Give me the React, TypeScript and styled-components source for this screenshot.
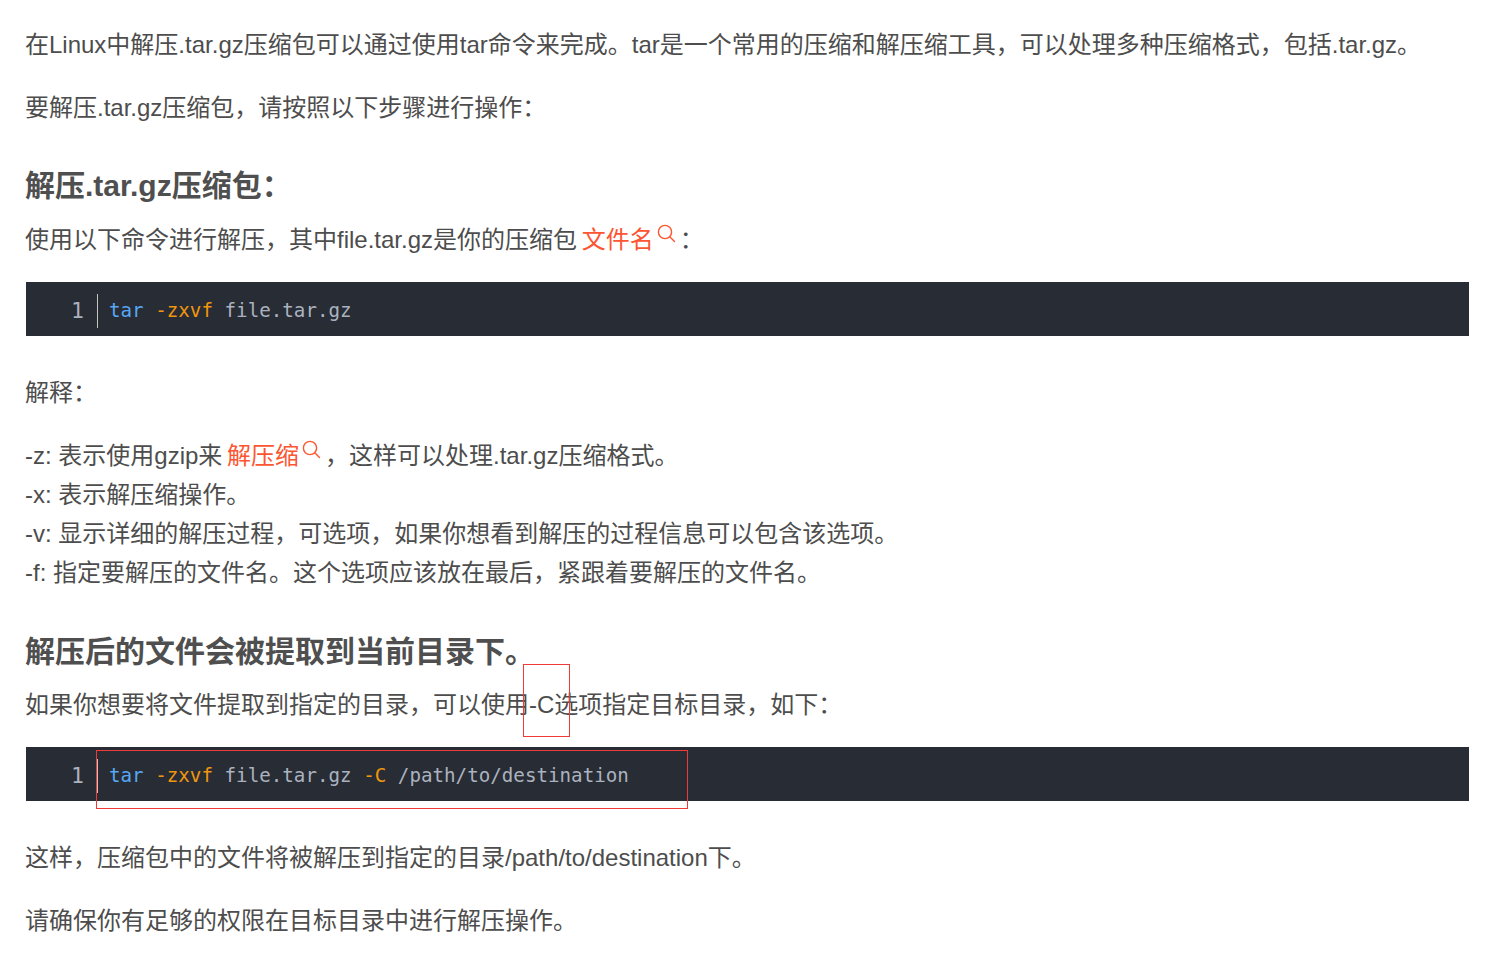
import React from "react";
import styled, { createGlobalStyle } from "styled-components";

const Global = createGlobalStyle`
  html, body { margin: 0; padding: 0; background: #fff; }
  body { overflow: hidden; }
`;
const Page = styled.div`
  position: relative;
  width: 1485px;
  height: 957px;
  padding: 25px 16px 0 26px;
  box-sizing: border-box;
  overflow: hidden;
  font-family: "Liberation Sans", "Noto Sans CJK SC", sans-serif;
  font-size: 24px;
  color: #4d4d4d;
`;
const Para = styled.p<{ $mt?: number }>`
  margin: ${(p) => p.$mt ?? 0}px 0 0 -1px;
  line-height: 39px;
  white-space: nowrap;
`;
const Heading = styled.h2<{ $mt: number }>`
  margin: ${(p) => p.$mt}px 0 0 -1px;
  font-size: 30px;
  line-height: 40px;
  font-weight: 700;
  color: #4f4f4f;
  white-space: nowrap;
`;
const Keyword = styled.span`
  color: #fc5531;
  margin-left: -2px;
`;
const SearchIcon = styled.svg`
  width: 20px;
  height: 22px;
  vertical-align: 3px;
  margin: 0 4px 0 2px;
`;
const CodeBlock = styled.div<{ $mt: number }>`
  margin-top: ${(p) => p.$mt}px;
  height: 54px;
  width: 1443px;
  padding-top: 4px;
  box-sizing: border-box;
  background: #282c34;
  display: flex;
  align-items: center;
  font-family: "DejaVu Sans Mono", monospace;
  font-size: 19.2px;
  color: #abb2bf;
  white-space: pre;
`;
const LineNo = styled.span`
  width: 72px;
  height: 34px;
  line-height: 34px;
  padding-right: 13px;
  box-sizing: border-box;
  text-align: right;
  font-size: 21.5px;
  border-right: 1px solid #c5c5c5;
  color: #abb2bf;
`;
const Code = styled.code`
  font: inherit;
  margin: 0 0 2px 11px;
`;
const Cmd = styled.span`
  color: #56a8f5;
`;
const Flag = styled.span`
  color: #f0960e;
`;
const Mark = styled.div`
  position: absolute;
  border: 1px solid #f03a3a;
  box-sizing: border-box;
  pointer-events: none;
`;

const Search = () => (
  <SearchIcon viewBox="0 0 20 22" fill="none" stroke="#fc5531" strokeWidth="1.4">
    <circle cx="9" cy="9" r="6.6" />
    <path d="M14 14l4.5 4.5" strokeLinecap="round" />
  </SearchIcon>
);

export default function App() {
  return (
    <Page>
      <Global />
      <Para>在Linux中解压.tar.gz压缩包可以通过使用tar命令来完成。tar是一个常用的压缩和解压缩工具&#xFF0C;可以处理多种压缩格式&#xFF0C;包括.tar.gz。</Para>
      <Para $mt={24}>要解压.tar.gz压缩包&#xFF0C;请按照以下步骤进行操作&#xFF1A;</Para>
      <Heading $mt={39}>解压.tar.gz压缩包&#xFF1A;</Heading>
      <Para $mt={14}>
        使用以下命令进行解压&#xFF0C;其中file.tar.gz是你的压缩包 <Keyword>文件名</Keyword>
        <Search />&#xFF1A;
      </Para>
      <CodeBlock $mt={23}>
        <LineNo>1</LineNo>
        <Code>
          <Cmd>tar</Cmd> <Flag>-zxvf</Flag> file.tar.gz
        </Code>
      </CodeBlock>
      <Para $mt={37}>解释&#xFF1A;</Para>
      <Para $mt={24}>
        -z: 表示使用gzip来 <Keyword>解压缩</Keyword>
        <Search />&#xFF0C;这样可以处理.tar.gz压缩格式。
      </Para>
      <Para>-x: 表示解压缩操作。</Para>
      <Para>-v: 显示详细的解压过程&#xFF0C;可选项&#xFF0C;如果你想看到解压的过程信息可以包含该选项。</Para>
      <Para>-f: 指定要解压的文件名。这个选项应该放在最后&#xFF0C;紧跟着要解压的文件名。</Para>
      <Heading $mt={40}>解压后的文件会被提取到当前目录下。</Heading>
      <Para $mt={13}>如果你想要将文件提取到指定的目录&#xFF0C;可以使用-C选项指定目标目录&#xFF0C;如下&#xFF1A;</Para>
      <CodeBlock $mt={23}>
        <LineNo>1</LineNo>
        <Code>
          <Cmd>tar</Cmd> <Flag>-zxvf</Flag> file.tar.gz <Flag>-C</Flag> /path/to/destination
        </Code>
      </CodeBlock>
      <Para $mt={37}>这样&#xFF0C;压缩包中的文件将被解压到指定的目录/path/to/destination下。</Para>
      <Para $mt={24}>请确保你有足够的权限在目标目录中进行解压操作。</Para>
      <Mark style={{ left: 523, top: 664, width: 47, height: 73 }} />
      <Mark style={{ left: 96, top: 750, width: 592, height: 59 }} />
    </Page>
  );
}
